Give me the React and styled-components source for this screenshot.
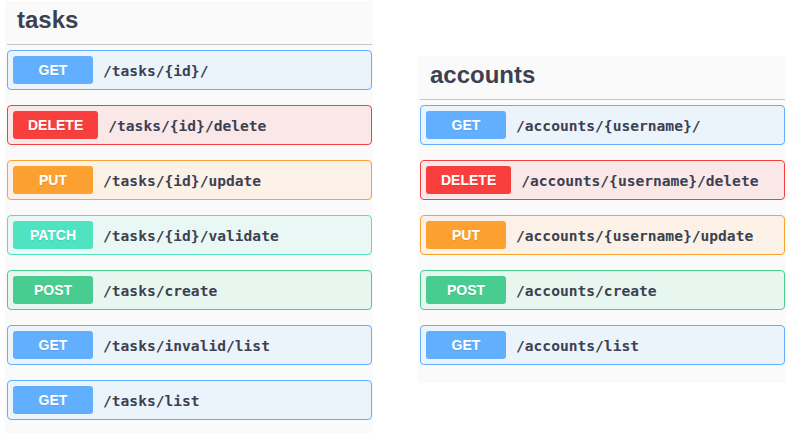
import styled, { createGlobalStyle } from 'styled-components';

const Global = createGlobalStyle`
	body {
		margin: 0;
		background: #fff;
		font-family: 'Liberation Sans', Arial, sans-serif;
	}
`

const METHODS = {
	GET: { main: '#61affe', bg: '#ebf3fb' },
	DELETE: { main: '#f93e3e', bg: '#fae7e7' },
	PUT: { main: '#fca130', bg: '#fbf1e6' },
	PATCH: { main: '#50e3c2', bg: '#e9f8f5' },
	POST: { main: '#49cc90', bg: '#e8f6f0' },
}

const Page = styled.div`
	display: flex;
	align-items: flex-start;
	gap: 45px;
	padding-left: 5px;
`
const Tag = styled.section`
	width: 368px;
	box-sizing: border-box;
	margin-top: ${p => p.$offset}px;
	padding: 0 1px 18px 2px;
	background: #fafafa;
`
const Title = styled.h3`
	margin: 0 0 5px;
	padding: 5px 10px 10px;
	font-family: 'Liberation Sans', Arial, sans-serif;
	font-size: 24px;
	font-weight: 700;
	line-height: 28px;
	color: #3b4151;
	border-bottom: 1px solid #c4c6cb;
`
const List = styled.div`
	display: flex;
	flex-direction: column;
	gap: 15px;
`
const Op = styled.div`
	display: flex;
	align-items: center;
	height: 40px;
	box-sizing: border-box;
	padding: 0 5px;
	border: 1px solid ${p => METHODS[p.$method].main};
	border-radius: 4px;
	background: ${p => METHODS[p.$method].bg};
`
const Method = styled.span`
	min-width: 80px;
	height: 28px;
	box-sizing: border-box;
	padding: 0 15px;
	border-radius: 3px;
	background: ${p => METHODS[p.$method].main};
	color: #fff;
	font-family: 'Liberation Sans', Arial, sans-serif;
	font-size: 14px;
	font-weight: 700;
	line-height: 28px;
	text-align: center;
	text-shadow: 0 1px 0 rgba(0, 0, 0, 0.1);
`
const Path = styled.span`
	margin-left: 10px;
	font-family: 'DejaVu Sans Mono', monospace;
	font-size: 14.6px;
	font-weight: 700;
	color: #3b4151;
`

const tasks = [
	['GET', '/tasks/{id}/'],
	['DELETE', '/tasks/{id}/delete'],
	['PUT', '/tasks/{id}/update'],
	['PATCH', '/tasks/{id}/validate'],
	['POST', '/tasks/create'],
	['GET', '/tasks/invalid/list'],
	['GET', '/tasks/list'],
]

const accounts = [
	['GET', '/accounts/{username}/'],
	['DELETE', '/accounts/{username}/delete'],
	['PUT', '/accounts/{username}/update'],
	['POST', '/accounts/create'],
	['GET', '/accounts/list'],
]

const Section = ({ name, ops, offset }) => (
	<Tag $offset={offset}>
		<Title>{name}</Title>
		<List>
			{ops.map(([m, path]) => (
				<Op key={m + path} $method={m}>
					<Method $method={m}>{m}</Method>
					<Path>{path}</Path>
				</Op>
			))}
		</List>
	</Tag>
)

const App = () => {
	return (
		<>
			<Global />
			<Page>
				<Section name='tasks' ops={tasks} offset={1} />
				<Section name='accounts' ops={accounts} offset={56} />
			</Page>
		</>
	)
}

export default App;
